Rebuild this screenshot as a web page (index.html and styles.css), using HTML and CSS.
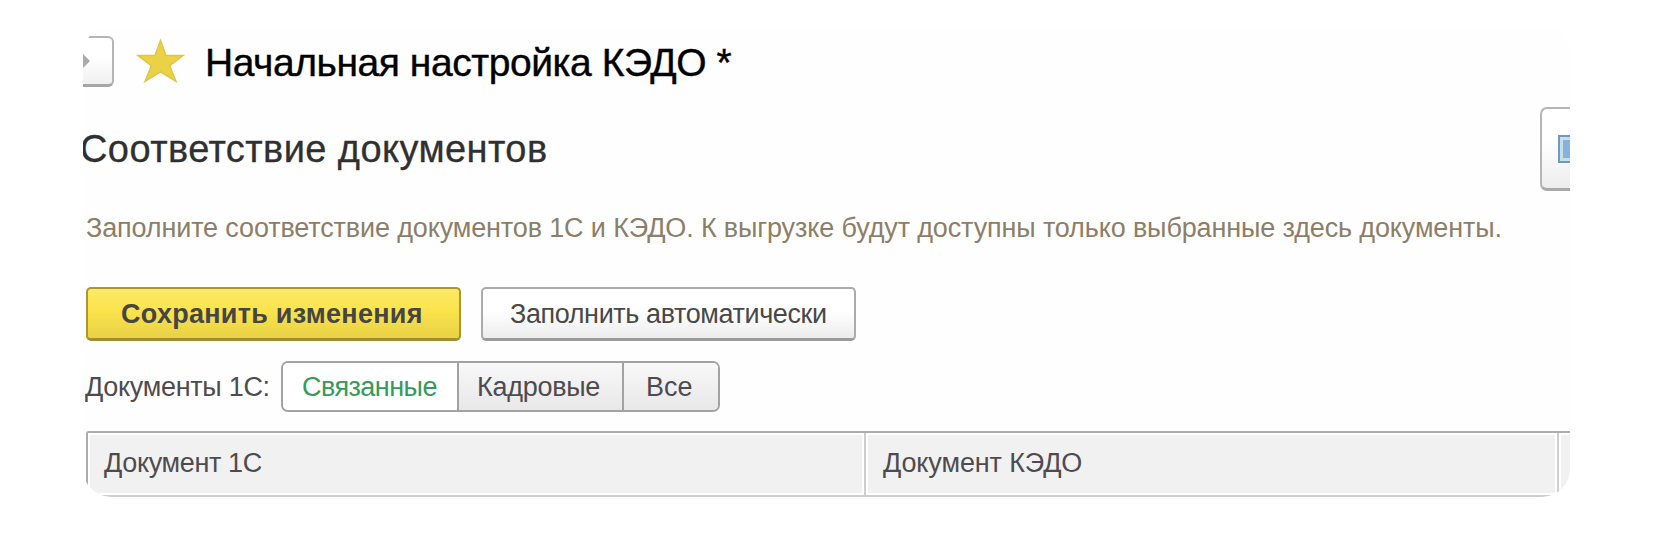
FILE: index.html
```
<!DOCTYPE html>
<html lang="ru">
<head>
<meta charset="utf-8">
<title>Начальная настройка КЭДО</title>
<link rel="stylesheet" href="styles.css">
</head>
<body>
<main class="window">
  <header class="titlebar">
    <button class="nav" aria-label="Вперёд"><svg width="7" height="14" viewBox="0 0 7 14"><path d="M0 0L7 7L0 14Z" fill="#aaa"/></svg></button>
    <svg class="star" width="49" height="46" viewBox="0 0 49 46"><path d="M24.500 2.500L30 17.500L47 17.500L33.700 27.700L40 43.500L24.500 33.800L9 43.500L15.300 27.700L2 17.500L19 17.500Z" fill="#ebd244" stroke="#dfc54b" stroke-width="1.500"/></svg>
    <h1 class="title"><span>Начальная настройка КЭДО *</span></h1>
  </header>
  <section class="section-head">
    <h2 class="subtitle"><span>Соответствие документов</span></h2>
    <button class="side-button" aria-label="Список"><svg width="12" height="28" viewBox="0 0 12 28"><rect x="1" y="1" width="26" height="26" fill="#c6e0ea" stroke="#7299bd" stroke-width="2"/><rect x="5" y="5" width="18" height="18" fill="#88b2dc"/></svg></button>
  </section>
  <p class="hint"><span>Заполните соответствие документов 1С и КЭДО. К выгрузке будут доступны только выбранные здесь документы.</span></p>
  <div class="actions">
    <button class="btn primary"><span>Сохранить изменения</span></button>
    <button class="btn plain"><span>Заполнить автоматически</span></button>
  </div>
  <div class="filter">
    <span class="filter-label">Документы 1С:</span>
    <div class="segments">
      <button class="seg active"><span>Связанные</span></button>
      <button class="seg personnel"><span>Кадровые</span></button>
      <button class="seg all"><span>Все</span></button>
    </div>
  </div>
  <div class="table-head">
    <div class="cell first"><span>Документ 1С</span></div>
    <div class="cell second"><span>Документ КЭДО</span></div>
    <div class="cell last"></div>
  </div>
</main>
</body>
</html>
```
FILE: styles.css
```
* { box-sizing: border-box; }
body {
  margin: 0;
  height: 534px;
  padding: 26px 83px 0;
  background: #fff;
  font-family: "Liberation Sans", Arial, sans-serif;
  font-size: 27px;
  color: #4e4b50;
  overflow: hidden;
}
button {
  margin: 0;
  padding: 0;
  font: inherit;
  color: inherit;
  white-space: nowrap;
}
h1, h2, p { margin: 0; font-weight: normal; white-space: nowrap; }
.window {
  width: 1487px;
  height: 471px;
  border-radius: 28px;
  overflow: hidden;
  background: #fefefe;
  display: flex;
  flex-direction: column;
}
.titlebar {
  height: 71px;
  flex: none;
  display: flex;
  align-items: flex-start;
}
.nav {
  width: 31px;
  height: 51px;
  margin-top: 10px;
  border: 2px solid #b5b5b5;
  border-bottom: 3px solid #a6a6a6;
  border-left: 0;
  border-radius: 0 6px 6px 0;
  background: linear-gradient(#fff 40%, #f0f0f0);
  display: flex;
  align-items: center;
}
.star { margin: 12px 0 0 22px; flex: none; }
.title {
  margin: 13px 0 0 20px;
  color: #000;
  font-size: 39px;
  line-height: 48px;
  letter-spacing: -0.44px;
  -webkit-text-stroke: 0.4px #000;
}
.section-head {
  height: 97px;
  flex: none;
  display: flex;
  justify-content: space-between;
}
.subtitle {
  margin: 28px 0 0 -3px;
  color: #303030;
  font-size: 38px;
  line-height: 48px;
  letter-spacing: 0.42px;
  -webkit-text-stroke: 0.3px #303030;
}
.side-button {
  width: 30px;
  height: 84px;
  margin-top: 10px;
  border: 2px solid #b5b5b5;
  border-bottom: 3px solid #a9a9a9;
  border-right: 0;
  border-radius: 7px 0 0 7px;
  background: linear-gradient(#fff 40%, #ededed);
  display: flex;
  align-items: center;
  justify-content: flex-end;
}
.hint {
  height: 93px;
  flex: none;
  padding: 17px 0 0 3px;
  color: #8c7e68;
  line-height: 34px;
  letter-spacing: -0.135px;
}
.actions {
  height: 74px;
  flex: none;
  padding-left: 3px;
  display: flex;
  gap: 20px;
}
.btn {
  height: 54px;
  padding-top: 2px;
  border-radius: 5px;
  display: flex;
  justify-content: flex-start;
  align-items: center;
}
.primary {
  width: 375px;
  padding-left: 33px;
  border: 2px solid #aa9732;
  border-bottom: 3px solid #a08f32;
  background: linear-gradient(#fcea65, #fbe34c 45%, #e8d145);
  color: #454545;
  font-weight: bold;
  letter-spacing: 0.28px;
}
.plain {
  width: 375px;
  padding-left: 27px;
  border: 2px solid #ababab;
  border-bottom: 3px solid #9b9b9b;
  background: linear-gradient(#fff 45%, #ececec);
  color: #484848;
  letter-spacing: -0.4px;
}
.filter {
  height: 70px;
  flex: none;
  padding-left: 2px;
  display: flex;
}
.filter-label {
  width: 196px;
  line-height: 52px;
  white-space: nowrap;
  letter-spacing: -0.3px;
}
.segments {
  width: 439px;
  height: 51px;
  border: 2px solid #a2a2a2;
  border-radius: 7px;
  overflow: hidden;
  display: flex;
}
.seg {
  height: 100%;
  padding-top: 2px;
  border: 0;
  text-align: left;
  background: linear-gradient(#f8f8f8, #e8e8e8);
}
.active { width: 174px; padding-left: 19px; color: #359a5b; background: #fff; letter-spacing: -0.55px; }
.personnel { width: 165px; padding-left: 18px; border-left: 2px solid #a2a2a2; letter-spacing: -0.28px; }
.all { flex: 1; padding-left: 22px; border-left: 2px solid #a2a2a2; }
.table-head {
  height: 66px;
  flex: none;
  margin-left: 3px;
  border-top: 2px solid #acacac;
  border-left: 2px solid #acacac;
  border-bottom: 2px solid #cecece;
  border-top-left-radius: 3px;
  display: flex;
}
.cell {
  border: 2px solid #fff;
  background: #f1f1f1;
  line-height: 57px;
  white-space: nowrap;
}
.first { width: 776px; padding-left: 14px; letter-spacing: -0.35px; }
.second { width: 691px; padding-left: 15px; letter-spacing: -0.12px; margin-left: 2px; box-shadow: -2px 0 #cecece; }
.last { flex: 1; border-right: 0; margin-left: 2px; box-shadow: -2px 0 #cecece; }
```
